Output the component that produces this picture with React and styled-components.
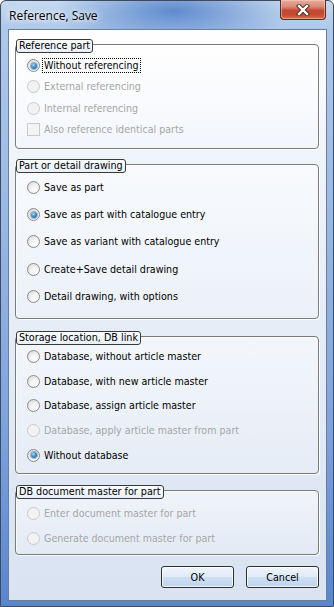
import styled, { createGlobalStyle } from 'styled-components'

const GlobalStyle = createGlobalStyle`
  html, body {
    margin: 0;
    padding: 0;
    background: #ffffff;
  }
  body {
    font-family: "DejaVu Sans Condensed", "DejaVu Sans", sans-serif;
    font-stretch: condensed;
  }
  * { box-sizing: border-box; }
`

const Window = styled.div`
  width: 334px;
  height: 607px;
  border: 1px solid #3d4a60;
  border-radius: 6px 6px 0 0;
  padding: 0 6px 5px 7px;
  display: flex;
  flex-direction: column;
  background:
    radial-gradient(ellipse 120px 36px at 52% 10px, rgba(78, 126, 200, 0.85), rgba(78, 126, 200, 0) 100%),
    linear-gradient(to bottom, #c6daf0 0px, #aec8ea 28px, #9fbde6 160px, #7ea4dc 420px, #5985cf 100%);
`

const TitleBar = styled.div`
  height: 28px;
  display: flex;
  align-items: flex-start;
`

const Title = styled.div`
  margin: 7px 0 0 1px;
  font-family: "Open Sans", "Noto Sans", sans-serif;
  font-stretch: normal;
  font-size: 12px;
  line-height: 15px;
  color: #000;
  text-shadow: 0 0 8px #fff, 0 0 4px #fff;
`

const CloseButton = styled.div`
  margin: -1px 1px 0 auto;
  width: 46px;
  height: 20px;
  border: 1px solid #5a2a24;
  border-top: none;
  border-radius: 0 0 4px 4px;
  display: flex;
  align-items: center;
  justify-content: center;
  background: linear-gradient(to bottom, #e9ab9c 0%, #d98a77 35%, #c24a33 55%, #c6482f 75%, #d96a4a 100%);
  box-shadow: inset 0 0 0 1px rgba(255, 210, 200, 0.5);
`

const Client = styled.div`
  flex: 1;
  border: 1px solid #6a7d99;
  padding: 14px 7px 0 6px;
  display: flex;
  flex-direction: column;
  background: linear-gradient(to bottom, #ffffff 0%, #f1f5fb 18%, #e4ecf6 55%, #d9e3f1 100%);
`

const Group = styled.div`
  position: relative;
  height: ${p => p.$h}px;
  margin-bottom: ${p => p.$mb}px;
  padding-top: ${p => p.$pt}px;
  border: 1px solid #7a7a7a;
  border-radius: 4px;
  display: flex;
  flex-direction: column;
  background: linear-gradient(to bottom, rgba(255, 255, 255, 0.55), rgba(255, 255, 255, 0.2));
  box-shadow: 1px 1px 0 rgba(255, 255, 255, 0.9), inset 1px 1px 0 rgba(255, 255, 255, 0.7);
`

const Legend = styled.span`
  position: absolute;
  top: -6px;
  left: 0;
  height: 14px;
  padding: 0 2px;
  border: 1px solid #3a3a3a;
  border-radius: 3px;
  font-size: 10.7px;
  line-height: 12px;
  color: #000;
  white-space: nowrap;
  background: linear-gradient(to bottom, #fbfdff, #e8eff8);
`

const Row = styled.div`
  height: ${p => p.$h}px;
  flex-shrink: 0;
  display: flex;
  align-items: center;
  padding-left: 11px;
  font-size: 10.6px;
  color: ${p => (p.$disabled ? '#a6a6a6' : '#000')};
  white-space: nowrap;
`

const Radio = styled.span`
  width: 13px;
  height: 13px;
  margin-right: 3px;
  flex-shrink: 0;
  border-radius: 50%;
  border: 1px solid ${p => (p.$disabled ? '#cacaca' : '#8a8b8c')};
  display: flex;
  align-items: center;
  justify-content: center;
  background: ${p =>
    p.$disabled
      ? '#f2f2f2'
      : 'radial-gradient(circle at 65% 70%, #ffffff 0%, #f1f1f1 45%, #d2d2d2 100%)'};

  &::after {
    content: '';
    display: ${p => (p.$checked ? 'block' : 'none')};
    width: 6px;
    height: 6px;
    border-radius: 50%;
    background: radial-gradient(circle at 40% 35%, #a6e0fb 0%, #3a8fc8 45%, #0f4d86 100%);
    box-shadow: 0 0 0 1px rgba(30, 60, 100, 0.35);
  }
`

const Check = styled.span`
  width: 13px;
  height: 13px;
  margin-right: 3px;
  flex-shrink: 0;
  border: 1px solid #cacaca;
  background: #f4f4f4;
`

const Label = styled.span`
  line-height: 13px;
  padding: 0 1px;
  margin-left: -1px;
  border: 1px dotted ${p => (p.$focus ? '#000' : 'transparent')};
`

const Footer = styled.div`
  display: flex;
  justify-content: flex-end;
  gap: 12px;
`

const Button = styled.button`
  width: 73px;
  height: 22px;
  padding: 0;
  border: 1px solid #2f2f2f;
  border-radius: 3px;
  font-family: inherit;
  font-size: 10.7px;
  color: #000;
  background: linear-gradient(to bottom, #eef5fc 0%, #e0ebf8 48%, #cddff2 52%, #bfd5ee 100%);
  box-shadow: inset 0 0 0 1px rgba(255, 255, 255, 0.75);
`

const CloseIcon = () => (
  <svg width="14" height="12" viewBox="0 0 14 12">
    <path d="M3 2 L11 10 M11 2 L3 10" stroke="#4a2a28" strokeWidth="4.2" strokeLinecap="square" fill="none" />
    <path d="M3 2 L11 10 M11 2 L3 10" stroke="#ffffff" strokeWidth="2.4" strokeLinecap="square" fill="none" />
  </svg>
)

const groups = [
  {
    title: 'Reference part', h: 105, mb: 15, pt: 10, row: 21.33,
    items: [
      { label: 'Without referencing', checked: true, focus: true },
      { label: 'External referencing', disabled: true },
      { label: 'Internal referencing', disabled: true },
      { label: 'Also reference identical parts', disabled: true, check: true },
    ],
  },
  {
    title: 'Part or detail drawing', h: 155, mb: 17, pt: 8.6, row: 27.35,
    items: [
      { label: 'Save as part' },
      { label: 'Save as part with catalogue entry', checked: true },
      { label: 'Save as variant with catalogue entry' },
      { label: 'Create+Save detail drawing' },
      { label: 'Detail drawing, with options' },
    ],
  },
  {
    title: 'Storage location, DB link', h: 138, mb: 16, pt: 7.4, row: 24.6,
    items: [
      { label: 'Database, without article master' },
      { label: 'Database, with new article master' },
      { label: 'Database, assign article master' },
      { label: 'Database, apply article master from part', disabled: true },
      { label: 'Without database', checked: true },
    ],
  },
  {
    title: 'DB document master for part', h: 65, mb: 11, pt: 9.8, row: 25,
    items: [
      { label: 'Enter document master for part', disabled: true },
      { label: 'Generate document master for part', disabled: true },
    ],
  },
]

export default function App() {
  return (
    <>
      <GlobalStyle />
      <Window>
        <TitleBar>
          <Title>Reference, Save</Title>
          <CloseButton>
            <CloseIcon />
          </CloseButton>
        </TitleBar>
        <Client>
          {groups.map(g => (
            <Group key={g.title} $h={g.h} $mb={g.mb} $pt={g.pt}>
              <Legend>{g.title}</Legend>
              {g.items.map(it => (
                <Row key={it.label} $h={g.row} $disabled={it.disabled}>
                  {it.check ? (
                    <Check />
                  ) : (
                    <Radio $checked={it.checked} $disabled={it.disabled} />
                  )}
                  <Label $focus={it.focus}>{it.label}</Label>
                </Row>
              ))}
            </Group>
          ))}
          <Footer>
            <Button>OK</Button>
            <Button>Cancel</Button>
          </Footer>
        </Client>
      </Window>
    </>
  )
}
